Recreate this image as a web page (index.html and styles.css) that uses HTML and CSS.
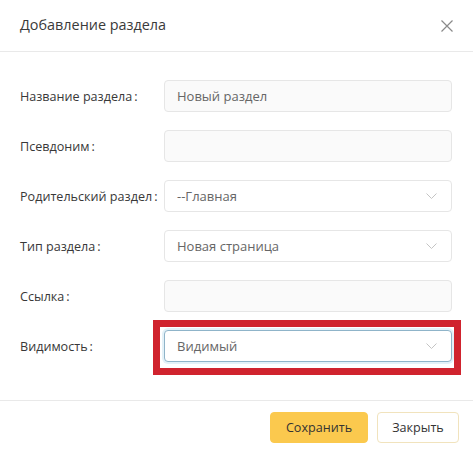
FILE: index.html
```html
<!DOCTYPE html>
<html lang="ru">
<head>
<meta charset="utf-8">
<title>Добавление раздела</title>
<link rel="stylesheet" href="styles.css">
</head>
<body>
<div class="modal">
  <div class="modal-header">
    <span class="modal-title">Добавление раздела</span>
    <svg class="close-icon" width="12" height="12" viewBox="0 0 12 12"><path d="M0.5 0.5 L11.5 11.5 M11.5 0.5 L0.5 11.5" stroke="#8a8a8a" stroke-width="1.2" fill="none"/></svg>
  </div>
  <div class="modal-body">
    <div class="row">
      <label class="label">Название раздела<span class="colon">:</span></label>
      <div class="field"><div class="input">Новый раздел</div></div>
    </div>
    <div class="row">
      <label class="label">Псевдоним<span class="colon">:</span></label>
      <div class="field"><div class="input"></div></div>
    </div>
    <div class="row">
      <label class="label">Родительский раздел<span class="colon">:</span></label>
      <div class="field"><div class="input select">--Главная<svg class="chev" width="11" height="6" viewBox="0 0 11 6"><path d="M0.5 0.5 L5.5 5.5 L10.5 0.5" stroke="#c4c4c4" stroke-width="1" fill="none"/></svg></div></div>
    </div>
    <div class="row">
      <label class="label">Тип раздела<span class="colon">:</span></label>
      <div class="field"><div class="input select">Новая страница<svg class="chev" width="11" height="6" viewBox="0 0 11 6"><path d="M0.5 0.5 L5.5 5.5 L10.5 0.5" stroke="#c4c4c4" stroke-width="1" fill="none"/></svg></div></div>
    </div>
    <div class="row">
      <label class="label">Ссылка<span class="colon">:</span></label>
      <div class="field"><div class="input"></div></div>
    </div>
    <div class="row">
      <label class="label">Видимость<span class="colon">:</span></label>
      <div class="field highlighted"><div class="input select focused">Видимый<svg class="chev" width="11" height="6" viewBox="0 0 11 6"><path d="M0.5 0.5 L5.5 5.5 L10.5 0.5" stroke="#c4c4c4" stroke-width="1" fill="none"/></svg></div></div>
    </div>
  </div>
  <div class="modal-footer">
    <button class="btn btn-save">Сохранить</button>
    <button class="btn btn-close">Закрыть</button>
  </div>
</div>
</body>
</html>
```
FILE: styles.css
```css
html, body {
  margin: 0;
  padding: 0;
  background: #ffffff;
}
body {
  font-family: "Open Sans", "Noto Sans", sans-serif;
  color: #333333;
  width: 473px;
  height: 453px;
  overflow: hidden;
}
.modal {
  display: flex;
  flex-direction: column;
}
.modal-header {
  height: 52px;
  border-bottom: 1px solid #e9e9e9;
  display: flex;
  align-items: center;
  justify-content: space-between;
  padding: 0 20px 0 20px;
  box-sizing: border-box;
}
.modal-title {
  font-size: 14.4px;
  color: #3a3a3a;
  margin-top: -2px;
}
.close-icon {
  display: block;
}
.modal-body {
  padding: 28px 21px 38px 20px;
  display: flex;
  flex-direction: column;
  gap: 18px;
}
.row {
  display: flex;
  align-items: center;
}
.label {
  width: 144px;
  flex: none;
  font-size: 12.6px;
  color: #383838;
}
.colon {
  margin-left: 2px;
}
.field {
  flex: 1;
  position: relative;
}
.input {
  height: 32px;
  box-sizing: border-box;
  border: 1px solid #e6e6e6;
  border-radius: 4px;
  background: #fafafa;
  padding: 0 12px;
  display: flex;
  align-items: center;
  justify-content: space-between;
  font-size: 13px;
  color: #666666;
}
.select {
  background: #ffffff;
  padding-right: 14px;
}
.focused {
  border-color: #8fb4c9;
  box-shadow: 0 0 0 2px #e3f1f8;
}
.highlighted::after {
  content: "";
  position: absolute;
  left: -11px;
  top: -10px;
  right: -9px;
  bottom: -13px;
  border: 7px solid #d0232e;
  pointer-events: none;
}
.modal-footer {
  border-top: 1px solid #e9e9e9;
  display: flex;
  justify-content: flex-end;
  gap: 9px;
  padding: 11px 14px 0 0;
}
.btn {
  height: 31px;
  border-radius: 4px;
  font-family: inherit;
  font-size: 12.6px;
  color: #333333;
  cursor: pointer;
}
.btn-save {
  width: 98px;
  background: #fbc94e;
  border: 1px solid #fbc94e;
}
.btn-close {
  width: 82px;
  background: #ffffff;
  border: 1px solid #f1e3bd;
}
```
